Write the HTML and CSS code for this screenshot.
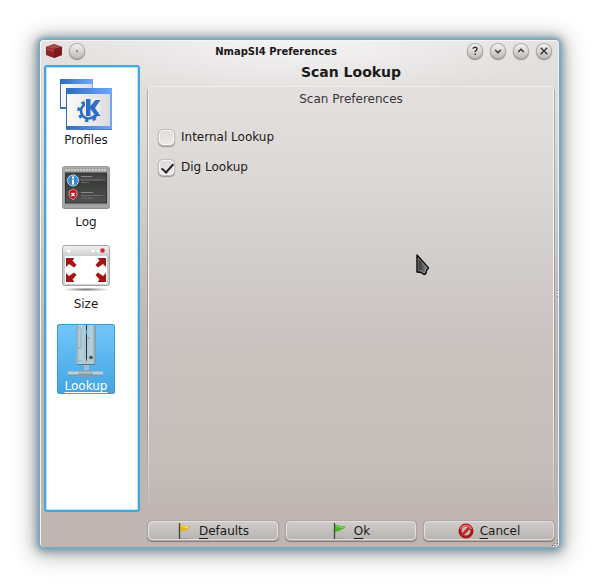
FILE: index.html
```html
<!DOCTYPE html>
<html lang="en">
<head>
<meta charset="utf-8">
<title>NmapSI4 Preferences</title>
<link rel="stylesheet" href="styles.css">
</head>
<body>
<main class="window">
  <header class="titlebar">
    <svg class="app-icon" width="16" height="16" viewBox="0 0 16 16" aria-hidden="true">
      <path d="M0 4 8 1l8 3v8l-8 3-8-3z" fill="#8e2226"/>
      <path d="M0 4 8 1l8 3-8 2z" fill="#a94a4c"/>
      <path d="M8 6l8-2v8l-8 3z" fill="#7c1a1e"/>
      <path d="M1 5l7 2v2L1 7z" fill="#c4686a" opacity=".5"/>
    </svg>
    <button class="round" aria-label="Sticky"><svg width="14" height="14" viewBox="0 0 15 15"><circle cx="7.5" cy="7.5" r=".9" fill="#444"/></svg></button>
    <h1 class="title">NmapSI4 Preferences</h1>
    <div class="controls">
      <button class="round" aria-label="Help"><svg width="14" height="14" viewBox="0 0 15 15"><path d="M5.5 5.2c0-2.4 4.2-2.3 4.2.1 0 1.6-2 1.6-2 3.4M7.7 10.3v1.4"/></svg></button>
      <button class="round" aria-label="Minimize"><svg width="14" height="14" viewBox="0 0 15 15"><path d="M4.500 6.500l3 3 3-3"/></svg></button>
      <button class="round" aria-label="Maximize"><svg width="14" height="14" viewBox="0 0 15 15"><path d="M4.500 8.500l3-3 3 3"/></svg></button>
      <button class="round" aria-label="Close"><svg width="14" height="14" viewBox="0 0 15 15"><path d="M4 4l7 7M11 4l-7 7"/></svg></button>
    </div>
  </header>

  <div class="content">
    <nav class="sidebar">
      <button class="item">
        <svg width="54" height="54" viewBox="0 0 54 54" aria-hidden="true">
          <defs>
            <linearGradient id="blue"><stop offset="0" stop-color="#2d6cc0"/><stop offset="1" stop-color="#70a6ff"/></linearGradient>
            <linearGradient id="paper"><stop offset="0" stop-color="#fafafa"/><stop offset="1" stop-color="#dcdcdf"/></linearGradient>
          </defs>
          <rect x="1" y="1" width="33" height="30" fill="url(#blue)"/>
          <rect x="2" y="6" width="31" height="23" fill="url(#paper)"/>
          <rect x="7" y="10" width="46" height="42" fill="#557bb0"/>
          <rect x="7" y="10" width="46" height="41" fill="url(#blue)"/>
          <rect x="8" y="16" width="43" height="32" fill="url(#paper)"/>
          <circle cx="29.500" cy="33" r="9.800" fill="none" stroke="#2e6fc6" stroke-width="3" stroke-dasharray="3.300 4.397"/>
          <circle cx="29.500" cy="33" r="7.500" fill="none" stroke="#2e6fc6" stroke-width="2.600"/>
          <path d="M26 20h15v17H26z" fill="#ececee"/>
          <path d="M27 21h4.500v7l5-6h5l-5.500 8 5.500 8h-5l-5-7v7H27z" fill="#2e6fc6"/>
          <path d="M38 34a9 9 0 0 1-3 6" fill="none" stroke="#2e6fc6" stroke-width="2.600"/>
        </svg>
        <span class="name">Profiles</span>
      </button>
      <button class="item">
        <svg width="50" height="54" viewBox="0 0 50 54" aria-hidden="true">
          <defs><linearGradient id="screen" x2="0" y2="1"><stop stop-color="#3b3d3c"/><stop offset=".25" stop-color="#50524f"/><stop offset=".27" stop-color="#393b39"/><stop offset="1" stop-color="#515350"/></linearGradient></defs>
          <rect x="1" y="6" width="48" height="43" rx="3" fill="#8e8e8e"/>
          <rect x="2" y="7" width="46" height="40" rx="2" fill="#a2a2a2" stroke="#b2b2b2"/>
          <path d="M4 10h42" stroke="#cacaca" stroke-width="2" stroke-dasharray="2 1"/>
          <rect x="4.500" y="13" width="41" height="30" fill="url(#screen)" stroke="#333"/>
          <circle cx="12" cy="20.500" r="5.500" fill="#3988d4" stroke="#c0d9ed"/>
          <path d="M12 16.500v2M12 19.500v5" stroke="#fff" stroke-width="2"/>
          <path d="M8 31l4-2 4 2v5l-4 4-4-4z" fill="#cf1718" stroke="#d9b8b8" stroke-width=".7"/>
          <path d="M10.500 33l3 3m0-3-3 3" stroke="#fff" stroke-width="1.500"/>
          <path d="M20 16.500h11M20 32.500h12" stroke="#888"/>
          <path d="M20 20h22M20 22.500h8M20 35.500h22M20 38h12" stroke="#737373" stroke-dasharray="3 .5"/>
        </svg>
        <span class="name">Log</span>
      </button>
      <button class="item">
        <svg width="50" height="54" viewBox="0 0 50 54" aria-hidden="true">
          <defs>
            <linearGradient id="frame" x2="0" y2="1"><stop stop-color="#f2f2f2"/><stop offset=".3" stop-color="#c8c8c8"/><stop offset="1" stop-color="#d0d0d0"/></linearGradient>
            <radialGradient id="under"><stop stop-color="#777"/><stop offset="1" stop-color="#777" stop-opacity="0"/></radialGradient>
            <path id="arrow" d="M0 0h8.500L6.500 2.500l4 4.500L8 9.500 3 6 0 9z" fill="#a41414"/>
          </defs>
          <ellipse cx="25" cy="47.500" rx="24" ry="2" fill="url(#under)"/>
          <rect x="1.500" y="3.500" width="47" height="40" rx="2" fill="url(#frame)" stroke="#a6a6a6"/>
          <rect x="4" y="14" width="42" height="28" fill="#fff"/>
          <path d="M5 8h5l-2.500 3zM30 8h4l-2 3zM35 8h4l-2 3z" fill="#fff"/>
          <circle cx="41.500" cy="8.500" r="2.200" fill="#d42a36"/>
          <use href="#arrow" transform="translate(5 16)"/>
          <use href="#arrow" transform="translate(45 16) scale(-1 1)"/>
          <use href="#arrow" transform="translate(5 40) scale(1 -1)"/>
          <use href="#arrow" transform="translate(45 40) scale(-1 -1)"/>
        </svg>
        <span class="name">Size</span>
      </button>
      <button class="item selected" aria-current="page">
        <svg width="50" height="54" viewBox="0 0 50 54" aria-hidden="true">
          <defs>
            <linearGradient id="tower"><stop stop-color="#8baab9"/><stop offset=".2" stop-color="#bad4df"/><stop offset=".5" stop-color="#a6c5d3"/><stop offset=".8" stop-color="#b8d1dc"/><stop offset="1" stop-color="#7896a6"/></linearGradient>
            <linearGradient id="pipe" x2="0" y2="1"><stop stop-color="#88abbd"/><stop offset=".4" stop-color="#cce0e8"/><stop offset="1" stop-color="#668698"/></linearGradient>
          </defs>
          <path d="M23 39h5v8h-5z" fill="#a2bfcb"/>
          <path d="M16 39h18v2H16z" fill="#547788"/>
          <path d="M15 1h20v39H15z" fill="url(#tower)"/>
          <path d="M16 4h4v20h-4zM17 37h4" fill="none" stroke="#8dabb9"/>
          <path d="M25.500 1v36" stroke="#24343b"/>
          <path d="M25.500 6v4" stroke="#00a9df"/>
          <path d="M25.500 35v2" stroke="#d43c48"/>
          <circle cx="30" cy="33.500" r="1.800" fill="#344e5c"/>
          <path d="M26 14h3" stroke="#819ca7"/>
          <rect x="7" y="47" width="35" height="5" fill="url(#pipe)"/>
          <rect x="17" y="46" width="15" height="7" rx="1" fill="#7fa1b2"/>
          <rect x="17" y="47" width="15" height="4" fill="url(#pipe)" opacity=".6"/>
        </svg>
        <span class="name">Lookup</span>
      </button>
    </nav>

    <section class="page">
      <h2 class="heading">Scan Lookup</h2>
      <fieldset class="group" aria-labelledby="group-title">
        <div class="group-title" id="group-title">Scan Preferences</div>
        <div class="option"><input type="checkbox" id="internal"><label for="internal">Internal Lookup</label></div>
        <div class="option"><input type="checkbox" id="dig" checked><label for="dig">Dig Lookup</label></div>
        <svg class="pointer" width="16" height="24" viewBox="0 0 16 24" aria-hidden="true">
          <defs><linearGradient id="ptr"><stop stop-color="#222"/><stop offset="1" stop-color="#999"/></linearGradient></defs>
          <path d="M1 1v17l4 .5 3 2 2-1 .5-3 2-2.500z" fill="url(#ptr)" stroke="#111" stroke-width="1.500" stroke-linejoin="round"/>
          <path d="M2.200 4v12.500l3 .3 2.800 1.800 1-.6.600-2.500 1.500-1.500z" fill="none" stroke="#aaa" stroke-width=".6"/>
        </svg>
      </fieldset>
      <div class="actions">
        <button class="action">
          <svg width="16" height="16" viewBox="0 0 16 16" aria-hidden="true"><path d="M3 15.500h10" stroke="#999" opacity=".6"/><path d="M3 2c3-1 5 2 10.500 1.500C13 6 9 6 8 7.500 6 9 5 8 3 9z" fill="#e2b51c"/><path d="M4 3c2 0 3 1.500 7 1.500" stroke="#ffe878" fill="none"/><path d="M2.500 0v16" stroke="#444" stroke-width="1.300"/></svg>
          <span><u>D</u>efaults</span>
        </button>
        <button class="action">
          <svg width="16" height="16" viewBox="0 0 16 16" aria-hidden="true"><path d="M3 15.500h10" stroke="#999" opacity=".6"/><path d="M3 2c3-1 5 2 10.500 1.500C13 6 9 6 8 7.500 6 9 5 8 3 9z" fill="#4fb52a"/><path d="M4 3c2 0 3 1.500 7 1.500" stroke="#8be065" fill="none"/><path d="M2.500 0v16" stroke="#444" stroke-width="1.300"/></svg>
          <span><u>O</u>k</span>
        </button>
        <button class="action">
          <svg width="16" height="16" viewBox="0 0 16 16" aria-hidden="true"><circle cx="8" cy="8" r="6" fill="none" stroke="#ad1515" stroke-width="3"/><path d="M4 12l8-8" stroke="#c42929" stroke-width="3"/><path d="M2.500 6a6 6 0 0 1 11 0" fill="none" stroke="#e07774" stroke-width="1.500"/></svg>
          <span><u>C</u>ancel</span>
        </button>
      </div>
    </section>
  </div>
  <span class="edge-dots"></span>
  <svg class="grip" width="7" height="7" viewBox="0 0 7 7" aria-hidden="true"><path d="M5 0h1v1H5zM2 3h1v1H2zM5 3h1v1H5zM0 5h1v1H0zM3 5h1v1H3z" fill="#77706e"/><path d="M6 1h1v1H6zM3 4h1v1H3zM6 4h1v1H6zM1 6h1v1H1zM4 6h1v1H4z" fill="#fff"/></svg>
</main>
</body>
</html>
```
FILE: styles.css
```css
* { box-sizing: border-box; }
body {
  margin: 0;
  padding: 40px;
  min-height: 100vh;
  display: flex;
  background: #fff;
  color: #1c1a1a;
  font: 12px/16px "DejaVu Sans", sans-serif;
}
button { font: inherit; color: inherit; border: 0; padding: 0; }
svg { display: block; flex: none; }
h1, h2 { margin: 0; }

.window {
  position: relative;
  flex: 1;
  min-width: 0;
  display: flex;
  flex-direction: column;
  padding: 0 4px 7px 4px;
  border-radius: 4px;
  background:
    radial-gradient(ellipse 260px 60px at 50% 0, #f5f4f4, rgba(245, 244, 244, 0)),
    linear-gradient(#e4e1e0, #dedad9 90px, #bfb5b1 300px);
  box-shadow: inset 1px 1px #f6f5f5, inset -1px 0 #f0eeed,
    0 0 3px 2px #75a9c3, 0 1px 10px 4px rgba(60, 85, 105, .5), 0 3px 22px 8px rgba(0, 0, 0, .22);
}
.titlebar {
  height: 25px;
  display: flex;
  align-items: center;
  gap: 8px;
  padding: 0 4px 3px 2px;
}
.title {
  flex: 1;
  padding-top: 1px;
  text-align: center;
  font-size: 10px;
  line-height: 16px;
  font-weight: bold;
}
.controls { display: flex; gap: 9px; }
.round {
  width: 14px;
  height: 14px;
  border-radius: 50%;
  background: linear-gradient(#f2f1f0, #bfbcba);
  box-shadow: 0 0 0 1px #b2aeac, 0 1px 1px 1px #8b8785;
}
.round path { fill: none; stroke: #333; stroke-width: 1.5px; }

.content { flex: 1; display: flex; gap: 7px; }
.sidebar {
  width: 96px;
  margin-bottom: 28px;
  padding: 11px 11px 0;
  display: flex;
  flex-direction: column;
  gap: 12px;
  background: #fff;
  border: 2px solid #44a8dc;
  border-radius: 3px;
  box-shadow: inset 0 0 0 1px #b8e2f7;
}
.item {
  width: 58px;
  height: 70px;
  display: flex;
  flex-direction: column;
  align-items: center;
  background: none;
  border-radius: 3px;
}
.selected {
  color: #fff;
  background: linear-gradient(#73c6fa, #43a5e2);
  box-shadow: inset 0 0 0 1px #3d9bd4;
}
.name { line-height: 17px; }
.selected .name { text-decoration: underline; text-decoration-skip-ink: none; text-underline-offset: 2px; }

.page { flex: 1; display: flex; flex-direction: column; min-width: 0; }
.heading { font-size: 14px; line-height: 14px; text-align: center; margin-bottom: 6px; }
.group {
  position: relative;
  flex: 1;
  min-width: 0;
  margin: 0 0 10px;
  padding: 6px 11px;
  border: 0;
  border-radius: 5px;
  background:
    linear-gradient(#b0abaa, #9c9796 75%, rgba(156, 151, 150, 0)) 0 4px / 1px 100% no-repeat,
    linear-gradient(#f5f3f3 75%, rgba(245, 243, 243, 0)) 1px 4px / 1px 100% no-repeat,
    linear-gradient(#b0abaa, #9c9796 75%, rgba(156, 151, 150, 0)) 100% 4px / 1px 100% no-repeat,
    linear-gradient(#f5f3f3 75%, rgba(245, 243, 243, 0)) calc(100% - 1px) 4px / 1px 100% no-repeat,
    linear-gradient(#f1efee, #f1efee) 0 1px / 100% 1px no-repeat,
    linear-gradient(#e4e0df, #dcd9d7 80px, #c9c3c0 260px, #c4beba 88%, rgba(196, 190, 186, 0)) 0 1px no-repeat;
}
.group-title { text-align: center; margin-bottom: 20px; color: #383636; }
.option { display: flex; align-items: center; gap: 7px; height: 20px; margin-bottom: 10px; }
.option input {
  appearance: none;
  width: 15px;
  height: 15px;
  margin: 0 0 0 1px;
  border: 1px solid #f8f7f7;
  border-radius: 4px;
  background: linear-gradient(#dfdddb, #ebe9e8);
  box-shadow: 0 0 0 1px #c2bdbb, 0 1px 1px 1px #98928f;
}
.option input:checked::before {
  content: "";
  display: block;
  width: 5px;
  height: 10px;
  margin: 0 0 0 4px;
  border: solid #222;
  border-width: 0 2px 2px 0;
  transform: rotate(42deg);
}
.pointer { position: absolute; left: 66%; top: 169px; }
.actions { display: grid; grid-template-columns: repeat(3, 1fr); gap: 8px; padding: 0 1px; }
.action {
  height: 19px;
  display: flex;
  align-items: center;
  justify-content: center;
  gap: 6px;
  border: 1px solid #e2dfde;
  border-radius: 4px;
  background: linear-gradient(#cfccca, #b8b4b1);
  box-shadow: 0 0 0 1px #afa7a4, 0 1px 1px 1px #827b78;
}
.action u { text-underline-offset: 3px; }
.edge-dots {
  position: absolute;
  right: 1px;
  top: 250px;
  width: 1px;
  height: 7px;
  background: repeating-linear-gradient(#85807e 0 1px, #fff 1px 2px, transparent 2px 3px);
}
.grip { position: absolute; right: 0; bottom: 0; }
```
